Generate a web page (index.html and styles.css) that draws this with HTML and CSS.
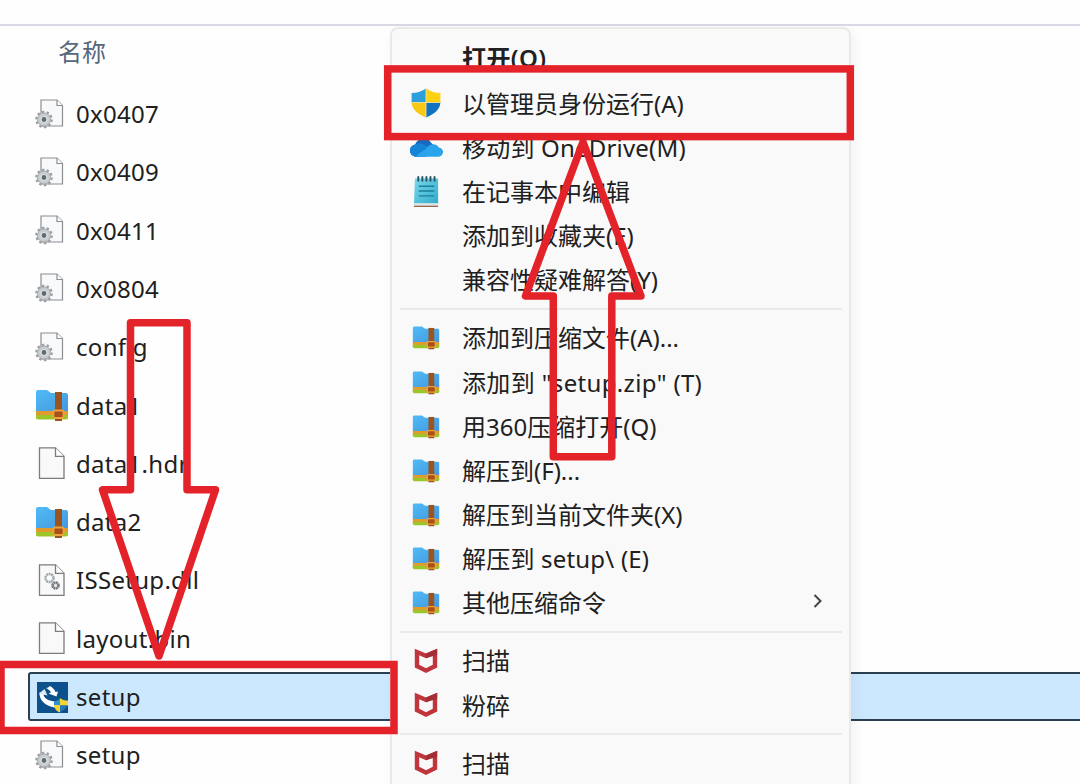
FILE: index.html
```html
<!DOCTYPE html>
<html lang="zh-CN">
<head>
    <meta charset="UTF-8">
    <meta name="viewport" content="width=device-width, initial-scale=1.0">
    <title>setup</title>
    <link rel="stylesheet" href="styles.css">
</head>
<body>
    <!-- shared icons -->
    <svg class="defs">
        <defs>
            <linearGradient id="folderBlue" x1="0" y1="0" x2="1" y2="1">
                <stop offset="0" stop-color="#4ebcf8"/>
                <stop offset="1" stop-color="#4796dc"/>
            </linearGradient>
            <linearGradient id="noteBlue" x1="0" y1="0" x2="1" y2="1">
                <stop offset="0" stop-color="#7bd9ec"/>
                <stop offset="1" stop-color="#2fa9c9"/>
            </linearGradient>
        </defs>
        <symbol id="gearfile" viewBox="0 0 34 34">
            <path d="M6 3h16l5.500 5.500v20.500H6z" fill="#f8f9fa" stroke="#8a8d91" stroke-width="1.2"/>
            <path d="M22 3v5.500h5.500" fill="#fff" stroke="#8a8d91" stroke-width="1.2"/>
            <circle cx="9" cy="22.500" r="7.600" fill="none" stroke="#9a9ea2" stroke-width="2.400" stroke-dasharray="2.500 2.270"/>
            <circle cx="9" cy="22.500" r="6.500" fill="#c9cdd0" stroke="#a4a9ac" stroke-width="1"/>
            <circle cx="9" cy="22.500" r="3" fill="#5d6b73" stroke="#dfe2e4" stroke-width="1.200"/>
        </symbol>
        <symbol id="file" viewBox="0 0 34 34">
            <path d="M4.500 1.800h16l8.500 8.500v22H4.500z" fill="#f9f9f9" stroke="#7c7c7c" stroke-width="1.300"/>
            <path d="M20.500 1.800v8.500H29" fill="#fff" stroke="#7c7c7c" stroke-width="1.300"/>
        </symbol>
        <symbol id="dll" viewBox="0 0 34 34">
            <use href="#file"/>
            <circle cx="14.500" cy="15" r="4" fill="#fff" stroke="#a3abb0" stroke-width="2.600" stroke-dasharray="2 .5"/>
            <circle cx="20.500" cy="22.500" r="3" fill="#e4e7e8" stroke="#747a7e" stroke-width="2.600" stroke-dasharray="1.900 .450"/>
        </symbol>
        <symbol id="zip" viewBox="0 0 34 34" preserveAspectRatio="none">
            <path d="M1 4q0-2 2-2h9l4 3h15q2 0 2 2v17H1z" fill="url(#folderBlue)"/>
            <path d="M1 23h32v6q0 2-2 2H3q-2 0-2-2z" fill="#e39a2d"/>
            <path d="M1 27h32v2.500q0 2-2 2H3q-2 0-2-2z" fill="#9cc52a"/>
            <path d="M20 4h7v29h-7z" fill="#9a541f"/>
            <rect x="18.500" y="22.500" width="10" height="7.500" rx="1.500" fill="#a6501a" stroke="#f0a03a" stroke-width="1.800"/>
        </symbol>
        <symbol id="setup" viewBox="0 0 34 34">
            <rect x="2" y="2" width="31" height="31" fill="#0d518c"/>
            <path d="M4.500 12.500c-.5 7 5 13.500 15.500 15v-6C14 21 9.500 18.500 8.500 15l2-1.500z" fill="#fff"/>
            <path d="M4 13.500L9.500 9l3 6.500z" fill="#dcebf7"/>
            <path d="M11 8c2 0 3-1 3.500-2 3 1 5.500 4 6 6l2.500-.500-1.500 5-8-3 2.500-1C15 10.500 13 9 11 8z" fill="#fff"/>
            <path d="M19 21.500c3-.5 5-1.500 6-3.500v7.500h-6z" fill="#2f91cf"/>
            <path d="M25 18c2 2 5 2.500 8 2.500v5h-8z" fill="#f3d636"/>
            <path d="M19 25h6v7.500c-3.500-1-5.500-4-6-7.500z" fill="#f3d636"/>
            <path d="M25 25.500h7c-1 3-3 5-7 6.500z" fill="#2878b8"/>
        </symbol>
        <symbol id="shield" viewBox="0 0 30 30">
            <path d="M15 .5v14.500H.6V5C6 5 10 3.500 15 .5z" fill="#2d9fdd"/>
            <path d="M15 .5c5 3 9 4.500 14.400 4.500v10H15z" fill="#ffd111"/>
            <path d="M.6 14.500H15v15C7 26 1 22 .6 14.500z" fill="#f8c814"/>
            <path d="M15 14.500h14.400C29 22 23 26 15 29.500z" fill="#1372c0"/>
            <path d="M15 .5v29M.6 14.500h28.800" stroke="#fbe9a6" stroke-width=".8"/>
        </symbol>
        <symbol id="cloud" viewBox="0 0 32 20">
            <path d="M7 19C-2 19-2 8 5 7 8 0 17-1 20 5l7 7-12 7z" fill="#1668c1"/>
            <path d="M5 7c5-2 10 0 14 4l-8 8H7C-2 19-2 8 5 7z" fill="#1584d8"/>
            <path d="M15 12c3-6 10-7 13-2 6 1 5 9-1 9H6c2-3 5-5 9-7z" fill="#2aa5ec"/>
        </symbol>
        <symbol id="note" viewBox="0 0 30 34" preserveAspectRatio="none">
            <path d="M3 3.500h24v28H2z" fill="url(#noteBlue)"/>
            <path d="M2 29h25v3.500H2z" fill="#dfe5e6"/>
            <path d="M2 32.300h25" stroke="#99694d" stroke-width="1.400"/>
            <path d="M7 11.500h16M7 16.500h16M7 21.500h16" stroke="#1d7d9d" stroke-width="1.500"/>
            <path d="M6.500 2v4M10.700 2v4M14.900 2v4M19.100 2v4M23.300 2v4" stroke="#2a5564" stroke-width="2" stroke-linecap="round"/>
        </symbol>
        <symbol id="mcafee" viewBox="0 0 24 26">
            <path fill-rule="evenodd" d="M.8.800L12 5.500 23.200.8v18.600L12 25 .8 19.400zM5.200 7.300v9.400L12 20.200l6.800-3.500V7.300L12 10.200z" fill="#c0343b"/>
            <path d="M12 5.500L23.200.8v6L12 10.200z" fill="#a22e36"/>
        </symbol>
    </svg>

    <div class="explorer">
        <div class="toolbar"></div>
        <div class="column-header">名称</div>
        <ul class="files">
            <li><svg><use href="#gearfile"/></svg><span>0x0407</span></li>
            <li><svg><use href="#gearfile"/></svg><span>0x0409</span></li>
            <li><svg><use href="#gearfile"/></svg><span>0x0411</span></li>
            <li><svg><use href="#gearfile"/></svg><span>0x0804</span></li>
            <li><svg><use href="#gearfile"/></svg><span>config</span></li>
            <li><svg><use href="#zip"/></svg><span>data1</span></li>
            <li><svg><use href="#file"/></svg><span>data1.hdr</span></li>
            <li><svg><use href="#zip"/></svg><span>data2</span></li>
            <li><svg><use href="#dll"/></svg><span>ISSetup.dll</span></li>
            <li><svg><use href="#file"/></svg><span>layout.bin</span></li>
            <li class="selected"><svg><use href="#setup"/></svg><span>setup</span></li>
            <li><svg><use href="#gearfile"/></svg><span>setup</span></li>
        </ul>
    </div>

    <div class="menu">
        <div class="item default"><i></i><span>打开(O)</span></div>
        <div class="item"><i><svg class="shield"><use href="#shield"/></svg></i><span>以管理员身份运行(A)</span></div>
        <div class="item"><i><svg class="cloud"><use href="#cloud"/></svg></i><span class="latin">移动到 OneDrive(M)</span></div>
        <div class="item"><i><svg class="note"><use href="#note"/></svg></i><span>在记事本中编辑</span></div>
        <div class="item"><i></i><span>添加到收藏夹(E)</span></div>
        <div class="item"><i></i><span>兼容性疑难解答(Y)</span></div>
        <hr>
        <div class="item"><i><svg class="zip"><use href="#zip"/></svg></i><span>添加到压缩文件(A)...</span></div>
        <div class="item"><i><svg class="zip"><use href="#zip"/></svg></i><span class="latin quoted">添加到 "setup.zip" (T)</span></div>
        <div class="item"><i><svg class="zip"><use href="#zip"/></svg></i><span>用360压缩打开(Q)</span></div>
        <div class="item"><i><svg class="zip"><use href="#zip"/></svg></i><span>解压到(F)...</span></div>
        <div class="item"><i><svg class="zip"><use href="#zip"/></svg></i><span>解压到当前文件夹(X)</span></div>
        <div class="item"><i><svg class="zip"><use href="#zip"/></svg></i><span class="latin">解压到 setup\ (E)</span></div>
        <div class="item"><i><svg class="zip"><use href="#zip"/></svg></i><span>其他压缩命令</span>
            <svg class="arrow" viewBox="0 0 10 16"><path d="M1.500 2l6 6-6 6" fill="none" stroke="#444" stroke-width="2"/></svg>
        </div>
        <hr>
        <div class="item"><i><svg class="mcafee"><use href="#mcafee"/></svg></i><span>扫描</span></div>
        <div class="item"><i><svg class="mcafee"><use href="#mcafee"/></svg></i><span>粉碎</span></div>
        <hr>
        <div class="item"><i><svg class="mcafee"><use href="#mcafee"/></svg></i><span>扫描</span></div>
    </div>

    <!-- red marks over the page -->
    <svg class="marks" viewBox="0 0 1080 784">
        <rect x="387.700" y="68.900" width="462.600" height="67.700"/>
        <rect x="1" y="664.500" width="393" height="66"/>
        <path d="M130.500 322.700H187v167h28.500L159 656 102.500 489.700h28z"/>
        <path d="M553.300 456.700h58.500V296H641L583 142 525.500 296h27.800z"/>
    </svg>
</body>
</html>
```

FILE: styles.css
```css
* {
    box-sizing: border-box;
}
body {
    margin: 0;
    height: 784px;
    position: relative;
    overflow: hidden;
    background: #fefefe;
    color: #202020;
    font-family: "Noto Sans", "Noto Sans CJK SC", sans-serif;
    font-size: 24px;
}
.defs {
    position: absolute;
    width: 0;
    height: 0;
}
.toolbar {
    height: 26px;
    border-bottom: 2px solid #d9d9e6;
}
.column-header {
    height: 58.400px;
    padding-left: 58px;
    line-height: 51px;
    color: #56677c;
}
.files {
    list-style: none;
    margin: 0;
    padding: 0 0 0 28px;
}
.files li {
    display: flex;
    align-items: center;
    gap: 7px;
    height: 48.300px;
    margin: 5px 0 10px;
    padding-left: 7px;
    letter-spacing: 0.3px;
}
.files svg {
    width: 34px;
    height: 34px;
    flex: none;
}
.files .selected {
    margin-right: -4px;
    background: #cce8ff;
    border: 2px solid #2b3f50;
    border-radius: 3px;
    padding-left: 5px;
}
.menu {
    position: absolute;
    left: 390px;
    top: 27px;
    width: 461px;
    height: 780px;
    padding-top: 8px;
    background: #f9f9f9;
    border: 2px solid #e9e9ec;
    border-radius: 8px;
    box-shadow: 4px 4px 14px rgba(0, 0, 0, 0.05);
}
.menu .item {
    display: flex;
    align-items: center;
    height: 44.150px;
    padding-right: 26px;
    white-space: pre;
}
.menu .item span {
    padding-bottom: 2px;
}
.menu .item i {
    display: flex;
    justify-content: center;
    width: 68px;
    margin-right: 2px;
}
.menu hr {
    height: 2px;
    margin: 6px 7px 6px 8px;
    border: 0;
    background: #e9e9e9;
}
.menu .default span {
    padding-bottom: 6px;
    font-weight: 600;
    letter-spacing: 0.4px;
}
.menu .latin {
    letter-spacing: 0.2px;
}
.menu .quoted {
    letter-spacing: 0.35px;
}
.shield {
    width: 30px;
    height: 30px;
}
.cloud {
    width: 33px;
    height: 21px;
}
.note {
    width: 29px;
    height: 33px;
}
.zip {
    width: 28px;
    height: 25px;
}
.mcafee {
    width: 24px;
    height: 26px;
}
.arrow {
    width: 10px;
    height: 16px;
    margin: 0 0 3px auto;
}
.marks {
    position: absolute;
    left: 0;
    top: 0;
    width: 1080px;
    height: 784px;
    fill: none;
    stroke: #e42229;
    stroke-width: 7.500px;
}
.marks path {
    stroke-linejoin: round;
}
```
